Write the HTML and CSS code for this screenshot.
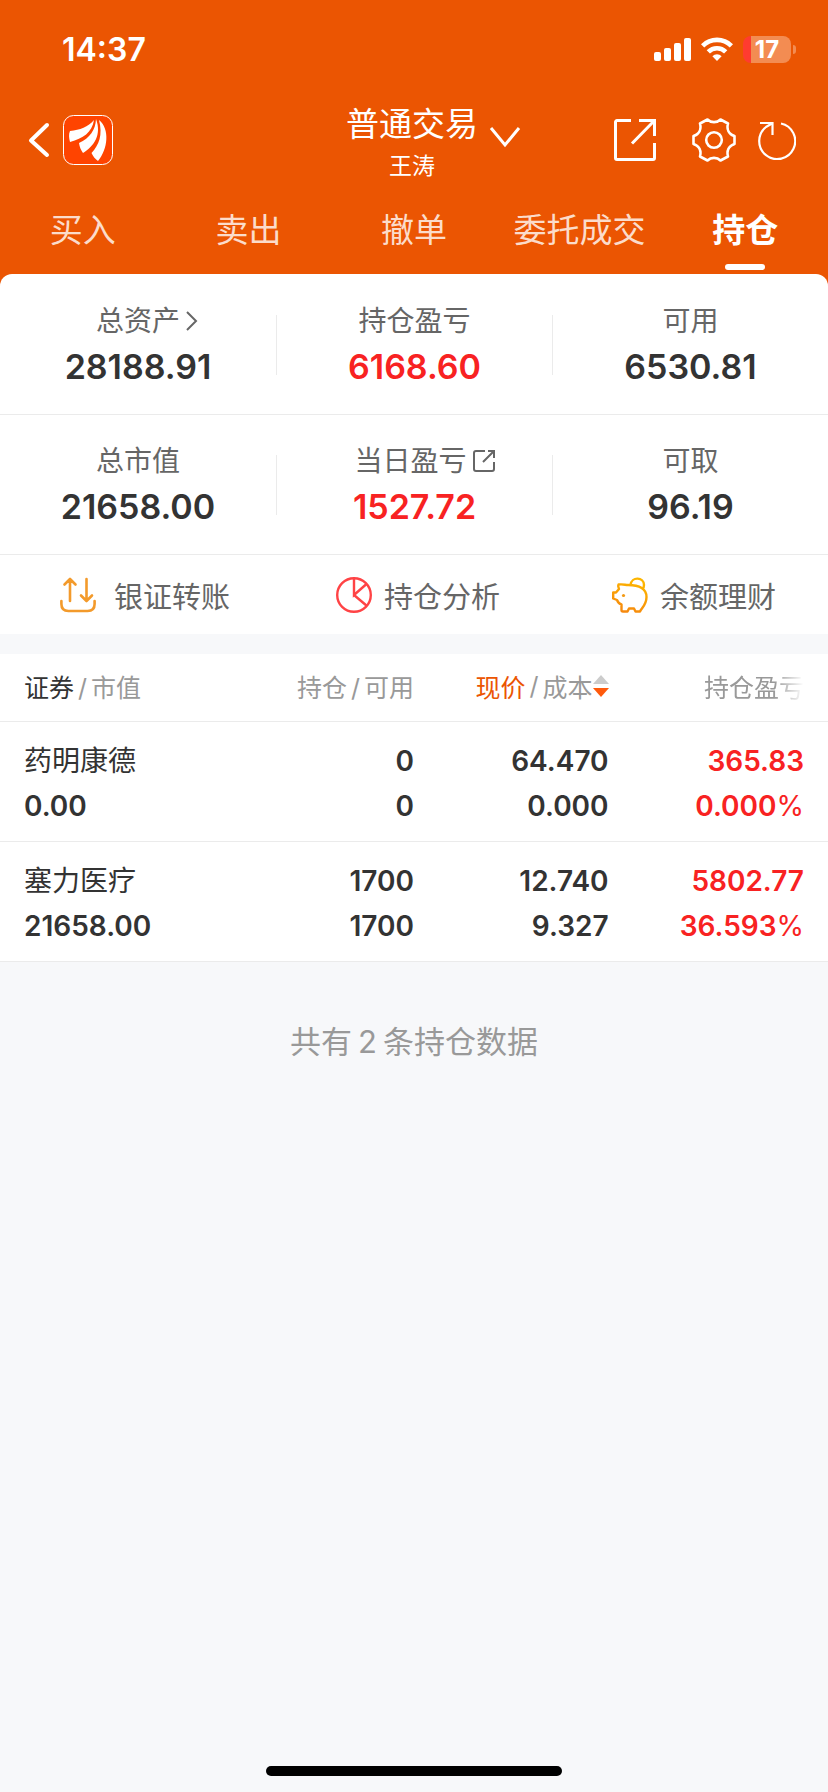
FILE: index.html
```
<!DOCTYPE html>
<html lang="zh-CN">
<head>
    <meta charset="UTF-8">
    <meta name="viewport" content="width=device-width, initial-scale=1.0">
    <title>普通交易</title>
    <link rel="stylesheet" href="styles.css">
</head>
<body>
    <div class="page">
        <header class="header">
            <div class="status">
                <span class="time">14:37</span>
                <div class="status-icons">
                    <svg class="signal" width="37" height="23" viewBox="0 0 37 23" fill="#fff">
                        <rect x="0" y="14" width="7" height="9" rx="2"/>
                        <rect x="10" y="10" width="7" height="13" rx="2"/>
                        <rect x="20" y="5" width="7" height="18" rx="2"/>
                        <rect x="30" y="0" width="7" height="23" rx="2"/>
                    </svg>
                    <svg class="wifi" width="32" height="24" viewBox="0 0 32 24" fill="none" stroke="#fff" stroke-width="4.6">
                        <path d="M1.6 8.8a20.4 20.4 0 0 1 28.8 0"/>
                        <path d="M7.3 14.8a12.3 12.3 0 0 1 17.4 0"/>
                        <path d="M16 24l-4.600-4.800a6.500 6.500 0 0 1 9.200 0z" fill="#fff" stroke="none"/>
                    </svg>
                    <div class="battery"><span>17</span></div>
                </div>
            </div>
            <div class="nav">
                <div class="nav-left">
                    <button class="icon-btn" aria-label="返回">
                        <svg width="22" height="36" viewBox="0 0 22 36" fill="none" stroke="#fff" stroke-width="4" stroke-linecap="round" stroke-linejoin="round"><path d="M19 3L3 18.500 19 33"/></svg>
                    </button>
                    <a class="logo" href="#" aria-label="首页">
                        <svg width="50" height="50" viewBox="0 0 50 50">
                            <rect x=".5" y=".5" width="49" height="49" rx="10" fill="#ff4400" stroke="#fff"/>
                            <g fill="#fff">
                                <path d="M31 5C25 12 17 15 7 16C5.500 19 6 23 7 27C20 23 29 18 31 5Z"/>
                                <path d="M33 4C32.500 15 27 23 16 28C16.500 32 18 35 20 38C31 31 39 20 33 4Z"/>
                                <path d="M36 5C40 20 36 30 28.500 38C30 41 32 44 35 46C45 34 47 14 36 5Z"/>
                            </g>
                        </svg>
                    </a>
                </div>
                <button class="account">
                    <span class="account-type">普通交易</span>
                    <span class="account-name">王涛</span>
                    <svg class="account-arrow" width="32" height="22" viewBox="0 0 32 22" fill="none" stroke="#fff" stroke-width="3"><path d="M2 2l14 17L30 2"/></svg>
                </button>
                <div class="nav-right">
                    <button class="icon-btn" aria-label="分享">
                        <svg width="42" height="42" viewBox="0 0 42 42" fill="none" stroke="#fff" stroke-width="3"><path d="M17 1.500H3a1.500 1.500 0 0 0-1.500 1.500v36A1.500 1.500 0 0 0 3 40.500h36a1.500 1.500 0 0 0 1.500-1.500V24"/><path d="M25 1.500h15.500V17M40 2L18 24.500"/></svg>
                    </button>
                    <button class="icon-btn gear" aria-label="设置">
                        <svg width="44" height="44" viewBox="0 0 44 44" fill="none" stroke="#fff" stroke-width="2.600" stroke-linejoin="round">
                            <path d="M15.500 1.500C19 5 25 5 28.500 1.500L36 5.500C34.500 11 36.500 16 42.500 18V26C36.500 28 34.500 33 36 38.500L28.500 42.500C25 39 19 39 15.500 42.500L8 38.500C9.500 33 7.500 28 1.500 26V18C7.500 16 9.500 11 8 5.500Z"/>
                            <circle cx="22" cy="22" r="7.800"/>
                        </svg>
                    </button>
                    <button class="icon-btn" aria-label="刷新">
                        <svg width="38" height="40" viewBox="0 0 38 40" fill="none" stroke="#fff" stroke-width="2.200"><path d="M23 3.500A18 18 0 1 1 8 7L14 3.500"/><path d="M2 3h12.500v12"/></svg>
                    </button>
                </div>
            </div>
            <nav class="tabs">
                <a href="#">买入</a>
                <a href="#">卖出</a>
                <a href="#">撤单</a>
                <a href="#">委托成交</a>
                <a href="#" class="active">持仓</a>
            </nav>
        </header>

        <section class="card">
            <div class="assets">
                <div class="asset">
                    <a href="#" class="label">总资产<svg class="arrow" width="12" height="20" viewBox="0 0 12 20" fill="none" stroke="#666" stroke-width="2"><path d="M1 1l9 9-9 9"/></svg></a>
                    <p class="num">28188.91</p>
                </div>
                <div class="asset">
                    <span class="label">持仓盈亏</span>
                    <p class="num red">6168.60</p>
                </div>
                <div class="asset">
                    <span class="label">可用</span>
                    <p class="num">6530.81</p>
                </div>
            </div>
            <div class="assets">
                <div class="asset">
                    <span class="label">总市值</span>
                    <p class="num">21658.00</p>
                </div>
                <div class="asset">
                    <a href="#" class="label today">当日盈亏<svg class="arrow" width="22" height="22" viewBox="0 0 22 22" fill="none" stroke="#666" stroke-width="2"><path d="M12 1H3a2 2 0 0 0-2 2v16a2 2 0 0 0 2 2h16a2 2 0 0 0 2-2v-7"/><path d="M15 1h6v7M20.500 1.500L10 12"/></svg></a>
                    <p class="num red">1527.72</p>
                </div>
                <div class="asset">
                    <span class="label">可取</span>
                    <p class="num">96.19</p>
                </div>
            </div>
            <div class="actions">
                <button class="transfer">
                    <svg width="36" height="36" viewBox="0 0 36 36" fill="none" stroke="#f39a2b" stroke-width="2.600" stroke-linecap="round" stroke-linejoin="round"><path d="M10 24V3M4.500 7.500L10 2l5.500 5.500M26.500 2v21M21 18.500l5.500 5.500 5.500-5.500"/><path d="M1.400 24v3q0 7 7 7h19.200q7 0 7-7v-3"/></svg>
                    银证转账
                </button>
                <button>
                    <svg width="36" height="36" viewBox="0 0 36 36" fill="none" stroke="#ff4345" stroke-width="2.400"><circle cx="18" cy="18" r="16.800"/><path d="M18 1v17L30.500 7M18 18l13 11"/></svg>
                    持仓分析
                </button>
                <button>
                    <svg width="36" height="36" viewBox="0 0 36 36" fill="none" stroke="url(#pig)" stroke-width="2.400" stroke-linejoin="round">
                        <defs><linearGradient id="pig" x1="0" y1="36" x2="12" y2="0" gradientUnits="userSpaceOnUse"><stop offset="0" stop-color="#f5820f"/><stop offset="1" stop-color="#fdb500"/></linearGradient></defs>
                        <path d="M16 8c-3 0-4-1-9.500-.5-1 2 .5 3.500.5 4.500L4 15.500H1.200v6L5 23c1 2.500 2.500 4 4.500 4.500v5.500c0 1 .5 1.500 1.500 1.500h4.500l1.500-3h5l1.500 3H28c1.500-3.500 6.500-6.500 6.500-14.500C34.500 12 28 8 16 8z"/>
                        <path d="M18.500 8c1-9 13.500-8 13.500 0 0 1.500-.5 3-1.500 4"/>
                        <circle cx="11.500" cy="18.500" r="1.600" fill="#f39a14" stroke="none"/>
                    </svg>
                    余额理财
                </button>
            </div>
        </section>

        <table class="table">
            <colgroup>
                <col class="col-name">
                <col class="col-hold">
                <col class="col-price">
                <col class="col-profit">
            </colgroup>
            <thead>
                <tr>
                    <th><b class="dark">证券</b><i>/</i>市值</th>
                    <th>持仓<i>/</i>可用</th>
                    <th><button class="sort"><b class="on">现价</b><i>/</i>成本<svg width="16" height="22" viewBox="0 0 16 22"><path d="M8 0l8 9H0z" fill="#ccc"/><path d="M8 22l8-9H0z" fill="#ff5a0c"/></svg></button></th>
                    <th><span class="fade">持仓盈亏</span></th>
                </tr>
            </thead>
            <tbody>
                <tr>
                    <td><p class="name">药明康德</p><p>0.00</p></td>
                    <td><p>0</p><p>0</p></td>
                    <td><p>64.470</p><p>0.000</p></td>
                    <td class="red"><p>365.83</p><p>0.000<span class="unit">%</span></p></td>
                </tr>
                <tr>
                    <td><p class="name">塞力医疗</p><p>21658.00</p></td>
                    <td><p>1700</p><p>1700</p></td>
                    <td><p>12.740</p><p>9.327</p></td>
                    <td class="red"><p>5802.77</p><p>36.593<span class="unit">%</span></p></td>
                </tr>
            </tbody>
        </table>
        <p class="total">共有<span>2</span>条持仓数据</p>
        <div class="home-bar"></div>
    </div>
</body>
</html>
```
FILE: styles.css
```
* {
    margin: 0;
    padding: 0;
    box-sizing: border-box;
}

body {
    font-family: Inter, "Noto Sans CJK SC", sans-serif;
    color: #333;
    background: #f7f8fa;
}

a {
    text-decoration: none;
    color: inherit;
}

button {
    border: none;
    background: none;
    font: inherit;
    color: inherit;
    cursor: pointer;
}

svg {
    display: block;
    flex-shrink: 0;
}

.page {
    min-height: 100vh;
    display: flex;
    flex-direction: column;
}

.red,
.num.red {
    color: #f82222;
}

/* 顶部 */
.header {
    background: #eb5502;
    color: #fff;
    padding-bottom: 16px;
}

.status {
    height: 100px;
    padding: 0 32px 2px 62px;
    display: flex;
    justify-content: space-between;
    align-items: center;
}

.time {
    font-size: 32px;
    font-weight: 600;
}

.status-icons {
    display: flex;
    align-items: center;
    gap: 10px;
}

.battery {
    position: relative;
    width: 48px;
    height: 27px;
    margin-right: 5px;
    border-radius: 8px;
    background: linear-gradient(to right, #ff3b30 8px, #f38c52 8px);
    font-size: 24px;
    font-weight: 700;
    line-height: 27px;
    text-align: center;
}

.battery::after {
    content: "";
    position: absolute;
    left: 50px;
    top: 9px;
    width: 3px;
    height: 9px;
    border-radius: 0 4px 4px 0;
    background: #f38c52;
}

.nav {
    height: 80px;
    padding: 0 28px;
    display: flex;
    justify-content: space-between;
    align-items: center;
}

.nav-left,
.nav-right {
    flex: 1;
    display: flex;
    align-items: center;
}

.nav-left {
    gap: 13px;
}

.nav-right {
    justify-content: flex-end;
    padding-right: 4px;
}

.gear {
    margin: 0 22px 0 36px;
}

.account {
    position: relative;
    display: flex;
    flex-direction: column;
    align-items: center;
    padding-top: 4px;
}

.account-type {
    font-size: 33px;
    line-height: 48px;
}

.account-name {
    font-size: 23px;
    line-height: 36px;
}

.account-arrow {
    position: absolute;
    left: 100%;
    top: 30px;
    margin-left: 11px;
}

.tabs {
    height: 94px;
    padding-top: 8px;
    display: grid;
    grid-template-columns: repeat(5, 1fr);
    text-align: center;
    font-size: 33px;
    line-height: 84px;
    color: #fbdccb;
}

.tabs .active {
    position: relative;
    color: #fff;
    font-weight: 700;
}

.tabs .active::after {
    content: "";
    position: absolute;
    left: 50%;
    bottom: 4px;
    width: 40px;
    height: 6px;
    margin-left: -20px;
    border-radius: 3px;
    background: #fff;
}

/* 资产 */
.card {
    margin-top: -16px;
    padding-top: 1px;
    border-radius: 12px 12px 0 0;
    background: #fff;
}

.assets {
    height: 140px;
    display: grid;
    grid-template-columns: repeat(3, 1fr);
    align-items: center;
    border-bottom: 1px solid #ebebeb;
}

.asset {
    height: 60px;
    display: flex;
    flex-direction: column;
    align-items: center;
    justify-content: center;
}

.asset + .asset {
    border-left: 1px solid #ebebeb;
}

.label {
    position: relative;
    font-size: 28px;
    line-height: 44px;
    color: #666;
}

.label .arrow {
    position: absolute;
    left: 100%;
    top: 50%;
    margin-left: 6px;
    transform: translateY(-50%);
}

.label.today {
    padding-right: 8px;
}

.label.today .arrow {
    margin-left: -2px;
}

.num {
    font-size: 34px;
    line-height: 48px;
    font-weight: 600;
}

.actions {
    height: 79px;
    display: grid;
    grid-template-columns: repeat(3, 1fr);
    font-size: 29px;
    color: #666;
}

.actions button {
    display: flex;
    align-items: center;
    justify-content: flex-end;
    gap: 12px;
    padding-right: 52px;
}

.actions .transfer {
    gap: 18px;
    padding-right: 46px;
}

/* 持仓列表 */
.table {
    width: 100%;
    margin-top: 20px;
    table-layout: fixed;
    border-collapse: collapse;
    background: #fff;
}

.col-name {
    width: 30%;
}

.col-hold {
    width: 20%;
}

.col-price {
    width: 23.5%;
}

.col-profit {
    width: 26.5%;
}

.table tr {
    border-bottom: 1px solid #ebebeb;
}

.table th,
.table td {
    text-align: right;
}

.table th:first-child,
.table td:first-child {
    text-align: left;
    padding-left: 24px;
}

.table th:last-child,
.table td:last-child {
    padding-right: 24px;
}

.table th {
    height: 67px;
    padding-bottom: 2px;
    font-size: 25px;
    font-weight: 400;
    color: #999;
}

.table th i {
    padding: 0 4px;
    font-style: normal;
}

.table th b {
    font-weight: 400;
}

.table .dark {
    color: #333;
}

.table .on {
    color: #eb5502;
}

.sort {
    display: inline-flex;
    align-items: center;
}

.fade {
    -webkit-mask-image: linear-gradient(to right, #000 70%, transparent);
    mask-image: linear-gradient(to right, #000 70%, transparent);
}

.table td {
    height: 120px;
    padding-top: 6px;
    font-size: 28px;
    font-weight: 600;
    line-height: 45px;
}

.table .name {
    font-weight: 400;
}

.table .unit {
    font-weight: 400;
}

.total {
    padding-top: 56px;
    text-align: center;
    font-size: 31px;
    line-height: 48px;
    color: #999;
}

.total span {
    padding: 0 6px;
}

.home-bar {
    width: 296px;
    height: 10px;
    margin: auto auto 16px;
    border-radius: 5px;
    background: #000;
}
```
